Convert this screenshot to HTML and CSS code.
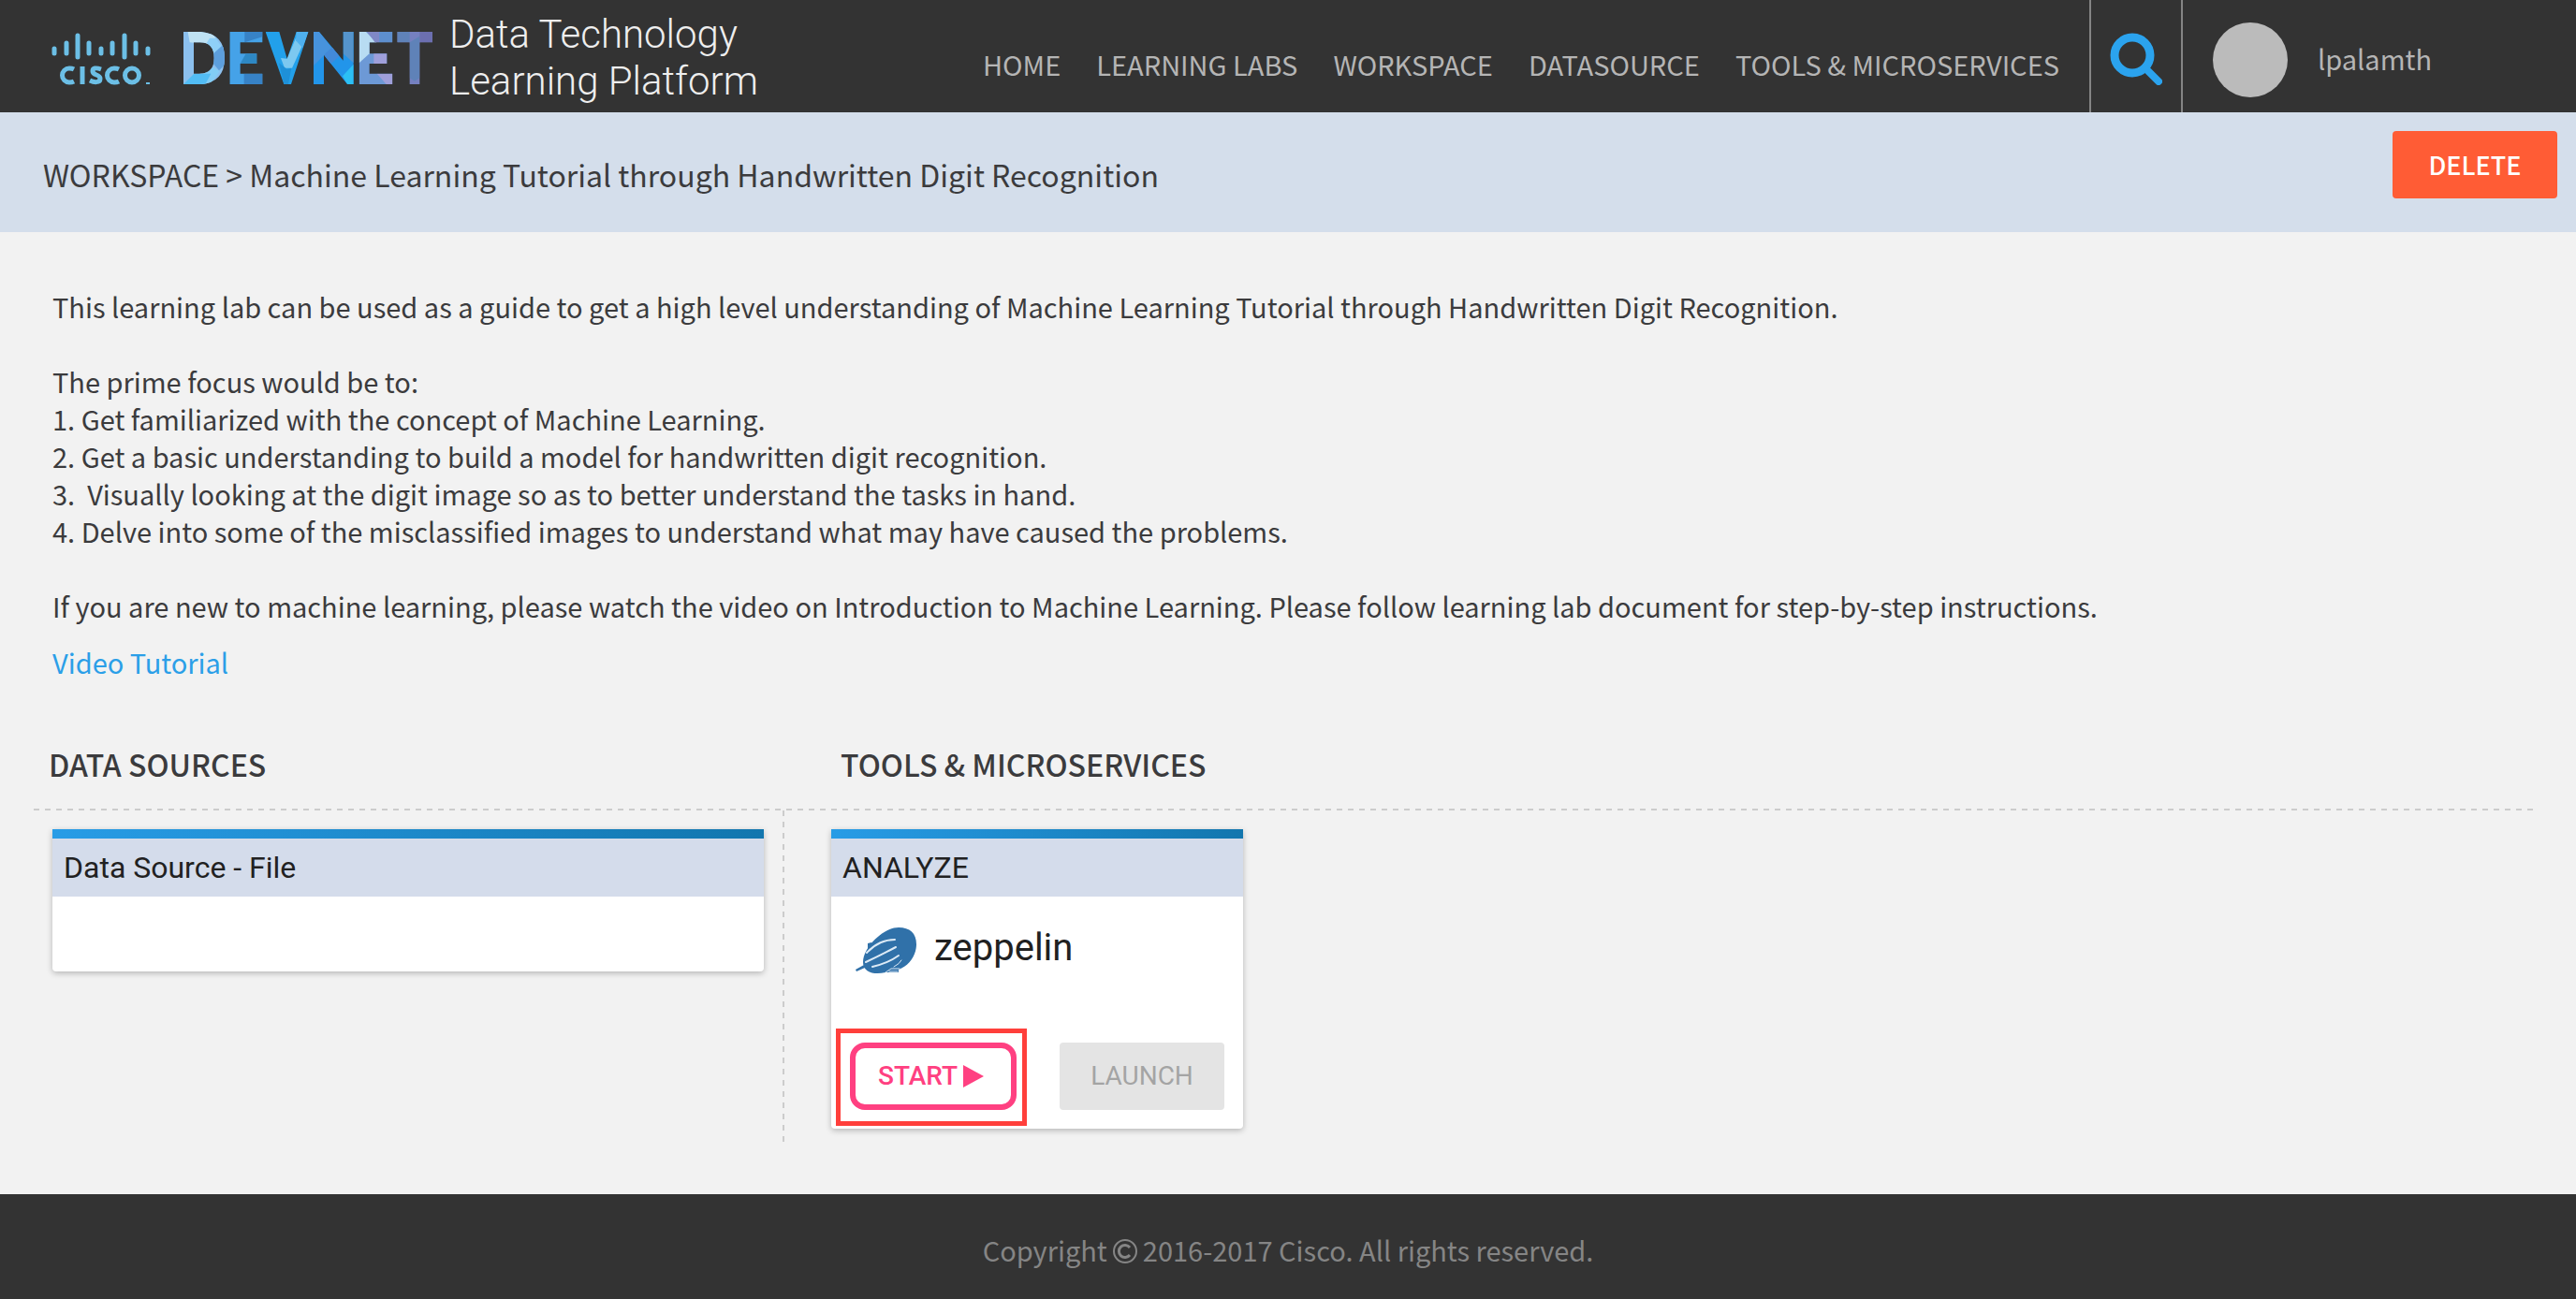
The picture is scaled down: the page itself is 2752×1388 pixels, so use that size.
FILE: index.html
```html
<!DOCTYPE html>
<html lang="en">
<head>
<meta charset="utf-8">
<title>Workspace - DevNet Data Technology Learning Platform</title>
<link rel="stylesheet" href="styles.css">
</head>
<body>
<header class="topbar">
  <a class="brand" href="#">
    <svg class="cisco" viewBox="0 0 108 90" role="img" aria-label="Cisco">
      <g fill="none" stroke="#6cbfe6" stroke-width="5">
        <path stroke-linecap="round" d="M4 40v5M17 34v11M29 26v23M41 34v11M54 40v5M66 34v11M79 26v23M91 34v11M104 40v5"/>
        <path d="M25 62q-2-1-5-1a7 7 0 0 0 0 15q3 0 5-1M34 59v19M54 62q-9-3-9 2c0 5 8 3 8 8c0 5-7 4-11 2M73 62q-2-1-5-1a7 7 0 0 0 0 15q3 0 5-1"/>
        <circle cx="87" cy="68.500" r="7.500"/>
      </g>
      <path d="M102 77h4" stroke="#6cbfe6" stroke-width="2"/>
    </svg>
    <svg class="devnet" viewBox="0 0 798 168" role="img" aria-label="DevNet">
      <defs>
        <clipPath id="word">
          <path clip-rule="evenodd" d="M0 0h55q77 6 77 84t-77 84H0zM33 34v100h20q45 0 45-50t-45-50zM148 0h105v34h-71v36h53v32h-53v32h71v34H148zM263 0h44l25 86 30-86h38l-55 168h-23zM417 0h18l77 92V0h33v168h-20l-75-94v94h-33zM563 0h107v34h-74v36h56v32h-56v32h74v34H563zM685 0h113v34h-41v134h-32V34h-40z"/>
        </clipPath>
      </defs>
      <g clip-path="url(#word)">
        <path fill="#8cc0ee" d="M0 0h140v168H0z"/>
        <path fill="#bfe2f3" d="M14 0h76l14 22-20 18-64-6z"/>
        <path fill="#8fd0f8" d="M84 20h20l20 30-28 20-22-34z"/>
        <path fill="#5d9fdd" d="M96 70l28-26h10v60l-20 20-20-24z"/>
        <path fill="#82cdf6" d="M50 134l46-20 20 12-30 42H40z"/>
        <path fill="#52bdf5" d="M0 168l34-34h54l-18 34z"/>
        <path fill="#45a2e8" d="M148 0h110v168H148z"/>
        <path fill="#3782c6" d="M196 0h57v16l-57 18zM194 134h59v34h-59z"/>
        <path fill="#2e88c4" d="M200 70h35v32h-53z"/>
        <path fill="#22a0ea" d="M263 0h140v168H263z"/>
        <path fill="#7cc8f0" d="M360 20l32 0-44 96-24 0-12-32 20 2z"/>
        <path fill="#4fb0ee" d="M362 0h40l-20 52-22-24z"/>
        <path fill="#1e90d8" d="M306 100l26 20 14-4-10 52h-14z"/>
        <path fill="#2295ea" d="M417 0h130v168H417z"/>
        <path fill="#4793dd" d="M417 0h18l40 52-58 56z"/>
        <path fill="#4389d8" d="M450 74l28-26 22 30-30 26z"/>
        <path fill="#5594cc" d="M512 0h33v100l-33-30z"/>
        <path fill="#2cc0f4" d="M510 142l35-38v64h-20z"/>
        <path fill="#6d99d6" d="M563 0h107v168H563z"/>
        <path fill="#b8dcf2" d="M563 0h22l34 34-23 36-33 30z"/>
        <path fill="#7f88c6" d="M588 0h40v34h-14z"/>
        <path fill="#5d8fce" d="M628 0h42v34h-42z"/>
        <path fill="#9f9fda" d="M610 70h42v32h-42zM620 134h50v34h-20z"/>
        <path fill="#7580c0" d="M685 0h113v168H685z"/>
        <path fill="#5f82b8" d="M685 0h40v34h-40zM725 34l32-20v134l-16 10-16-10z"/>
        <path fill="#6c6fb0" d="M757 0h41v34h-41z"/>
      </g>
    </svg>
    <span class="tagline">Data Technology<br>Learning Platform</span>
  </a>
  <nav class="menu">
    <a href="#">HOME</a>
    <a href="#">LEARNING LABS</a>
    <a href="#">WORKSPACE</a>
    <a href="#">DATASOURCE</a>
    <a href="#">TOOLS &amp; MICROSERVICES</a>
  </nav>
  <button class="search" type="button" aria-label="Search">
    <svg viewBox="0 0 56 56"><circle cx="24" cy="24" r="19" fill="none" stroke="#2ba3ee" stroke-width="9"/><path d="M38 38l14 14" stroke="#2ba3ee" stroke-width="8" stroke-linecap="round"/></svg>
  </button>
  <div class="user"><span class="avatar"></span><span class="username">lpalamth</span></div>
</header>

<section class="crumbs">
  <h1 class="crumb-text">WORKSPACE &gt; Machine Learning Tutorial through Handwritten Digit Recognition</h1>
  <button class="btn delete" type="button">DELETE</button>
</section>

<main class="content">
  <div class="intro">
    <p>This learning lab can be used as a guide to get a high level understanding of Machine Learning Tutorial through Handwritten Digit Recognition.</p>
    <p class="steps">The prime focus would be to:
1. Get familiarized with the concept of Machine Learning.
2. Get a basic understanding to build a model for handwritten digit recognition.
3.  Visually looking at the digit image so as to better understand the tasks in hand.
4. Delve into some of the misclassified images to understand what may have caused the problems.</p>
    <p>If you are new to machine learning, please watch the video on Introduction to Machine Learning. Please follow learning lab document for step-by-step instructions.</p>
  </div>
  <a class="video" href="#">Video Tutorial</a>

  <div class="board">
    <div class="heads">
      <h2>DATA SOURCES</h2>
      <h2>TOOLS &amp; MICROSERVICES</h2>
    </div>
    <div class="columns">
      <div class="column sources">
        <article class="card">
          <h3>Data Source - File</h3>
          <div class="card-space"></div>
        </article>
      </div>
      <div class="column tools">
        <article class="card tool">
          <h3>ANALYZE</h3>
          <div class="tool-name">
            <svg class="zeppelin" viewBox="0 0 66 52" aria-hidden="true">
              <path fill="#3071a9" d="M8 38C8 22 30 1 46 1c12 0 19 6 19 18 0 12-8 23-19 27v3H32c-12 3-24 0-24-11zM13 18l4-1 2 4-6 6zM0 46l9-5 1 3-9 4z"/>
              <g fill="none" stroke="#dceaf6" stroke-linecap="round"><path stroke-width="2" d="M12 28Q25 14 42 14M11 38Q28 30 43 22M18 43Q35 39 46 31"/><path d="M41 43Q47 40 49 36M32 49l6-4h9M36 48h9"/></g>
            </svg>
            <span>zeppelin</span>
          </div>
          <div class="actions">
            <div class="callout"><button class="btn start" type="button">START<svg viewBox="0 0 22 24" aria-hidden="true"><path d="M0 0l22 12L0 24z" fill="#ff4081"/></svg></button></div>
            <button class="btn launch" type="button" disabled>LAUNCH</button>
          </div>
        </article>
      </div>
    </div>
  </div>
</main>

<footer class="footer">Copyright <svg viewBox="0 0 28 28" role="img" aria-label="copyright"><circle cx="14" cy="14" r="12" fill="none" stroke="#858585" stroke-width="2"/><path d="M19 10a6.500 6.500 0 1 0 0 8" fill="none" stroke="#858585" stroke-width="3"/></svg> 2016-2017 Cisco. All rights reserved.</footer>
</body>
</html>
```
FILE: styles.css
```css
* { box-sizing: border-box; }

body {
  margin: 0;
  min-height: 100vh;
  display: flex;
  flex-direction: column;
  background: #f2f2f2;
  color: #3b3b3d;
  font-family: "Noto Sans CJK SC", "Noto Sans", sans-serif;
  font-size: 29px;
  line-height: 40px;
}

h1, h2, h3, p { margin: 0; font-weight: 400; }
a { color: inherit; text-decoration: none; }
button { font: inherit; border: 0; cursor: pointer; }
svg { display: block; flex: none; }

/* Top bar */
.topbar {
  display: flex;
  height: 120px;
  background: #333;
  color: #b5b5b5;
}
.brand { display: flex; flex: none; padding-left: 54px; }
.cisco { width: 108px; height: 90px; margin-top: 12px; }
.devnet { width: 266px; height: 56px; margin: 34px 0 0 34px; }
.tagline {
  margin: 12px 0 0 18px;
  color: #eee;
  font-family: Roboto, sans-serif;
  font-size: 42px;
  font-weight: 300;
  line-height: 50px;
  white-space: nowrap;
}
.menu {
  display: flex;
  gap: 38px;
  margin-left: auto;
  padding: 48px 32px 0 0;
  white-space: nowrap;
}
.search {
  flex: none;
  width: 100px;
  padding: 6px 20px 0;
  background: none;
  border-left: 2px solid #858585;
  border-right: 2px solid #858585;
}
.search svg { width: 56px; height: 56px; }
.user { display: flex; gap: 32px; width: 420px; padding: 24px 0 0 32px; flex: none; }
.avatar { width: 80px; height: 80px; border-radius: 50%; background: #bbb; }
.username { padding-top: 18px; }

/* Breadcrumb strip */
.crumbs {
  display: flex;
  justify-content: space-between;
  height: 128px;
  padding: 20px 20px 0 46px;
  background: #d4deeb;
}
.crumb-text { padding-top: 26px; font-size: 32px; }

.btn {
  height: 72px;
  border-radius: 4px;
  font-family: Roboto, sans-serif;
  font-size: 28px;
}
.delete {
  width: 176px;
  background: #ff5c35;
  color: #fff;
  font-family: "Noto Sans CJK SC", sans-serif;
  font-size: 27px;
  font-weight: 500;
}

/* Body text */
.content { flex: 1; padding: 59px 40px 0 36px; }
.intro { display: flex; flex-direction: column; gap: 40px; padding: 0 20px; }
.steps { white-space: pre-wrap; }
.video { display: inline-block; margin: 20px 20px 0; color: #2b9fe8; }

/* Data sources and tools */
.heads, .columns { display: grid; grid-template-columns: 802px 1fr; }
.heads {
  padding: 69px 0 30px;
  background: repeating-linear-gradient(90deg, #ccc 0 6px, transparent 6px 12px) bottom / 100% 2px no-repeat;
}
.heads h2 { padding-left: 16px; font-size: 32px; font-weight: 500; }
.heads h2 + h2 { padding-left: 60px; }
.column { padding-top: 20px; }
.sources {
  min-height: 360px;
  padding-left: 20px;
  padding-right: 22px;
  background: repeating-linear-gradient(#ccc 0 6px, transparent 6px 12px) right / 2px 100% no-repeat;
}
.tools { padding-left: 50px; }
.card {
  overflow: hidden;
  background: #fff;
  color: #212121;
  border-radius: 0 0 4px 4px;
  box-shadow: 0 2px 6px rgba(0, 0, 0, .25);
  font-family: Roboto, sans-serif;
}
.card::before {
  content: "";
  display: block;
  height: 10px;
  background: linear-gradient(90deg, #289ce6, #1276ae);
}
.card h3 { padding: 11px 12px; font-size: 32px; background: #d4dceb; }
.card-space { height: 80px; }
.tool { width: 440px; }
.tool-name { display: flex; gap: 18px; padding: 30px 26px 0; font-size: 40px; line-height: 50px; }
.zeppelin { width: 66px; height: 52px; margin-top: 2px; }
.actions { display: flex; justify-content: space-between; padding: 57px 20px 3px 5px; }
.callout { border: 5px solid #ff3f3b; padding: 10px 6px 12px 10px; }
.start {
  display: flex;
  align-items: center;
  gap: 6px;
  width: 178px;
  padding: 0 24px;
  background: #fff;
  color: #ff4081;
  border: 6px solid #ff4081;
  border-radius: 16px;
  font-weight: 500;
}
.start svg { width: 22px; height: 24px; }
.launch { width: 176px; margin-top: 15px; background: #e4e4e4; color: #a4a4a4; }

/* Footer */
.footer {
  display: flex;
  justify-content: center;
  gap: 5px;
  height: 112px;
  padding-top: 39px;
  background: #333;
  color: #858585;
}
.footer svg { width: 28px; height: 28px; margin-top: 8px; }
```
